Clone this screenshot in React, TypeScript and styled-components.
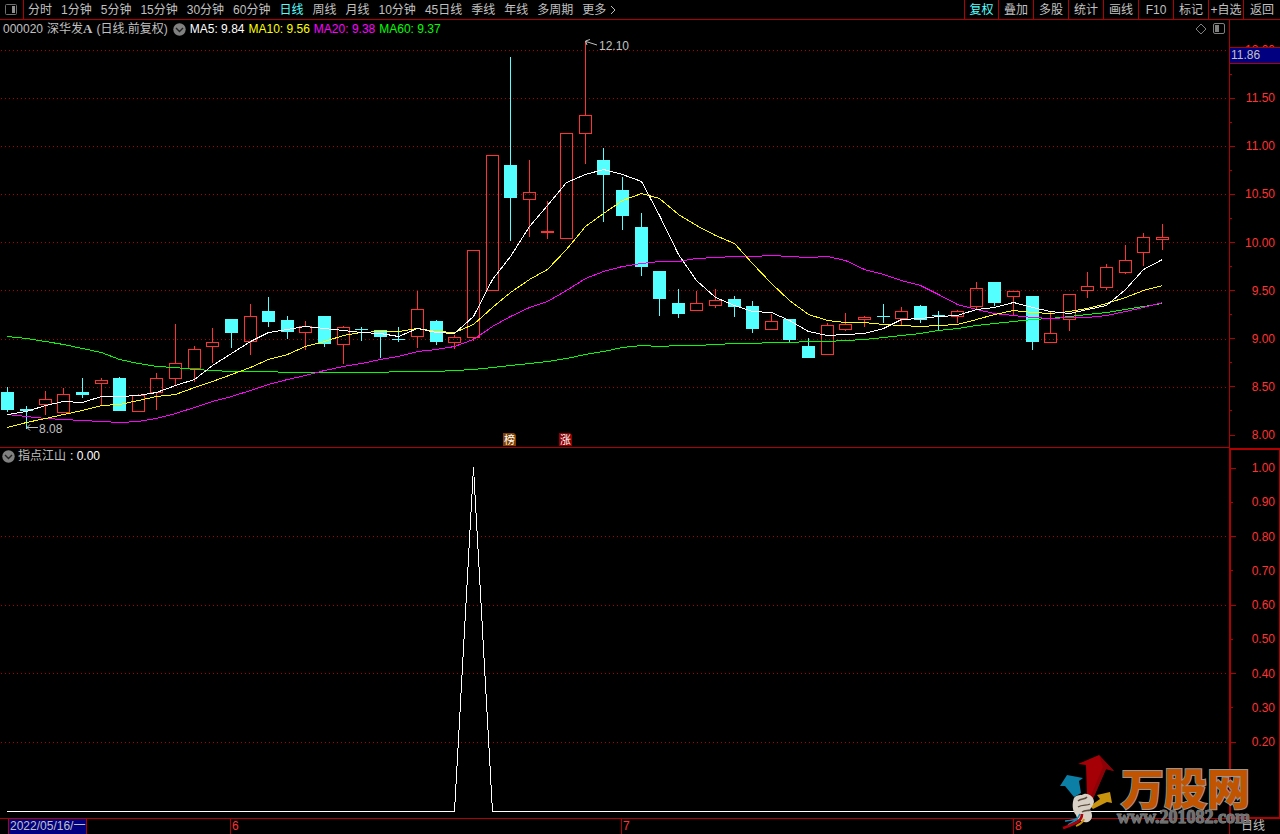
import React from "react";
import styled, { createGlobalStyle, css } from "styled-components";

const RED = "#b00000";
const BRIGHT = "#ff3232";
const CYAN = "#54ffff";
const SILVER = "#c0c0c0";
const NAVY = "#000080";

const GlobalStyle = createGlobalStyle`
  * { box-sizing: border-box; }
  body {
    margin: 0;
    background: #000;
    color: ${SILVER};
    font: 12px/16px "Liberation Sans", "Noto Sans CJK SC", sans-serif;
  }
`;

/* ---------- data ---------- */

type Candle = [kind: "u" | "d", high: number, top: number, bottom: number, low: number];

const candles: Candle[] = [
  ["d", 387, 392, 410, 412], ["d", 406, 409, 411, 429], ["u", 391, 399, 405, 415],
  ["u", 388, 394, 413, 413], ["d", 378, 392, 395, 398], ["u", 378, 380, 384, 406],
  ["d", 377, 378, 411, 411], ["u", 394, 395, 412, 412], ["u", 373, 378, 393, 410],
  ["u", 324, 363, 379, 385], ["u", 346, 349, 369, 382], ["u", 328, 342, 347, 363],
  ["d", 319, 319, 333, 348], ["u", 304, 316, 342, 355], ["d", 297, 311, 322, 327],
  ["d", 316, 320, 332, 339], ["u", 321, 326, 333, 350], ["d", 316, 316, 344, 347],
  ["u", 326, 327, 345, 364], ["d", 327, 329, 330, 341], ["d", 330, 330, 337, 358],
  ["d", 327, 339, 340, 342], ["u", 291, 309, 337, 348], ["d", 320, 321, 342, 345],
  ["u", 335, 337, 343, 349], ["u", 250, 250, 338, 341], ["u", 155, 155, 291, 291],
  ["d", 57, 165, 198, 241], ["u", 160, 192, 200, 237], ["u", 201, 231, 233, 239],
  ["u", 133, 133, 239, 239], ["u", 41, 115, 134, 164], ["d", 148, 160, 175, 222],
  ["d", 177, 190, 216, 230], ["d", 213, 227, 267, 276], ["d", 271, 271, 299, 316],
  ["d", 289, 303, 314, 318], ["u", 291, 303, 311, 311], ["u", 289, 300, 306, 308],
  ["d", 296, 299, 307, 317], ["d", 301, 306, 329, 333], ["u", 314, 321, 330, 330],
  ["d", 319, 319, 340, 342], ["d", 338, 346, 358, 358], ["u", 323, 325, 355, 355],
  ["u", 313, 324, 330, 331], ["u", 316, 317, 320, 327], ["d", 304, 316, 317, 323],
  ["u", 307, 311, 319, 325], ["d", 305, 306, 320, 323], ["d", 311, 315, 316, 330],
  ["u", 310, 311, 317, 323], ["u", 282, 288, 307, 309], ["d", 282, 282, 303, 306],
  ["u", 291, 291, 297, 316], ["d", 296, 296, 342, 350], ["u", 312, 333, 343, 343],
  ["u", 294, 294, 320, 331], ["u", 272, 286, 291, 298], ["u", 264, 267, 288, 290],
  ["u", 245, 260, 273, 274], ["u", 233, 237, 253, 266], ["u", 224, 237, 240, 250],
];

const averages = [
  {
    name: "MA60", value: "9.37", color: "#00ff00",
    ys: [336, 338, 341, 344, 348, 352, 359, 363, 366, 367, 369, 370, 371, 371, 371, 372, 372, 372, 372, 372, 372, 371, 371, 371, 370, 369, 367, 365, 363, 361, 358, 354, 351, 347, 345, 346, 345, 345, 344, 343, 343, 342, 342, 341, 341, 340, 339, 337, 335, 333, 330, 328, 325, 323, 321, 319, 318, 316, 314, 312, 309, 306, 303],
  },
  {
    name: "MA20", value: "9.38", color: "#ff00ff",
    ys: [414, 416, 418, 419, 420, 421, 422, 421, 418, 413, 407, 401, 396, 390, 384, 379, 375, 370, 366, 363, 359, 356, 351, 349, 346, 339, 326, 316, 307, 301, 290, 278, 271, 266, 263, 261, 261, 258, 257, 256, 256, 255, 256, 257, 256, 260, 269, 274, 280, 285, 294, 304, 309, 313, 315, 317, 318, 317, 317, 315, 311, 307, 302],
  },
  {
    name: "MA10", value: "9.56", color: "#ffff00",
    ys: [427, 422, 418, 414, 410, 405, 404, 400, 396, 394, 387, 381, 374, 367, 359, 354, 346, 341, 335, 332, 331, 331, 328, 331, 332, 324, 307, 292, 279, 269, 249, 226, 213, 200, 193, 198, 214, 225, 235, 243, 263, 283, 300, 314, 320, 322, 322, 324, 325, 326, 325, 324, 319, 314, 310, 312, 313, 311, 308, 303, 297, 290, 285],
  },
  {
    name: "MA5", value: "9.84", color: "#ffffff",
    ys: [414, 411, 405, 401, 402, 396, 396, 395, 392, 385, 379, 365, 353, 341, 332, 329, 326, 328, 330, 332, 333, 336, 328, 332, 333, 316, 279, 256, 226, 205, 182, 174, 169, 174, 181, 215, 254, 280, 297, 305, 311, 312, 320, 331, 335, 334, 333, 328, 319, 318, 316, 315, 309, 307, 302, 307, 311, 313, 309, 305, 289, 269, 259],
  },
];

const periods = ["分时", "1分钟", "5分钟", "15分钟", "30分钟", "60分钟", "日线", "周线", "月线", "10分钟", "45日线", "季线", "年线", "多周期"];
const tools = ["复权", "叠加", "多股", "统计", "画线", "F10", "标记", "+自选", "返回"];
const prices = ["12.00", "11.50", "11.00", "10.50", "10.00", "9.50", "9.00", "8.50", "8.00"];
const levels = ["1.00", "0.90", "0.80", "0.70", "0.60", "0.50", "0.40", "0.30", "0.20"];

const candleX = (i: number) => Math.floor(7.95 + i * 18.62);

/* ---------- parts ---------- */

const Page = styled.main`
  position: relative;
  display: flex;
  flex-direction: column;
  overflow: hidden;
`;

const Toolbar = styled.nav`
  display: flex;
  justify-content: space-between;
  height: 20px;
  border-bottom: 1px solid ${RED};
`;

const Periods = styled.div`
  display: flex;
  gap: 9px;
`;

const barButton = css`
  padding: 0;
  border: 0;
  background: none;
  color: ${SILVER};
  font: inherit;
  line-height: 18px;
  white-space: nowrap;
  cursor: pointer;
`;

const PeriodButton = styled.button<{ $active?: boolean }>`
  ${barButton}
  display: flex;
  align-items: center;
  color: ${(p) => (p.$active ? CYAN : SILVER)};
`;

const PanelButton = styled.button`
  ${barButton}
  display: grid;
  place-items: center;
  width: 24px;
  margin-right: -5px;
  border-right: 1px solid ${RED};
`;

const Tools = styled.div`
  display: flex;
`;

const ToolButton = styled.button<{ $active?: boolean }>`
  ${barButton}
  width: 35px;
  border-left: 1px solid ${RED};
  color: ${(p) => (p.$active ? CYAN : SILVER)};
  &:first-child { width: 34px; }
  &:last-child { width: 37px; }
`;

const Panel = styled.section`
  display: flex;
  align-items: stretch;
`;

const PlotArea = styled.div`
  flex: 1;
  min-width: 0;
  display: flex;
  flex-direction: column;
  border-bottom: 1px solid ${RED};
`;

const Legend = styled.header<{ $height: number }>`
  display: flex;
  align-items: center;
  height: ${(p) => p.$height}px;
  padding: 0 3px;
  gap: 4px;
  white-space: nowrap;
`;

const LegendText = styled.span<{ $color?: string }>`
  color: ${(p) => p.$color ?? SILVER};
`;

const SerifMark = styled.b`
  font-family: "Liberation Serif", serif;
  font-size: 13px;
`;

const Collapse = styled.button`
  display: grid;
  place-items: center;
  width: 14px;
  height: 14px;
  margin: 0 -1px 0 1px;
  padding: 0;
  border: 0;
  background: none;
`;

const LowerCollapse = styled(Collapse)`
  margin: 0 -1px 0 -2px;
`;

const LegendIcons = styled.span`
  display: flex;
  gap: 6px;
  margin-left: auto;
`;

const Plot = styled.svg`
  display: block;
  width: 100%;
  height: auto;
`;

const Axis = styled.ol<{ $framed?: boolean }>`
  position: relative;
  flex: none;
  display: flex;
  flex-direction: column;
  justify-content: space-between;
  width: 51px;
  margin: 0;
  padding: 22px 5px 5px 0;
  list-style: none;
  color: ${BRIGHT};
  border-left: 1px solid ${RED};
  ${(p) =>
    p.$framed &&
    css`
      padding: 10px 4px 67px 0;
      border: 2px solid ${RED};
      border-right-width: 1px;
    `}
`;

const Tick = styled.li<{ $minor?: boolean }>`
  display: flex;
  align-items: center;
  justify-content: space-between;
  height: 16px;
  &::before {
    content: "";
    width: ${(p) => (p.$minor ? 2 : 5)}px;
    height: 1px;
    background: ${RED};
  }
`;

const CursorPrice = styled.output`
  position: absolute;
  top: 27px;
  left: 0;
  right: 0;
  height: 17px;
  padding-left: 1px;
  border: solid ${RED};
  border-width: 1px 0;
  background: ${NAVY};
  color: ${SILVER};
  line-height: 14px;
`;

const Timeline = styled.footer`
  display: grid;
  grid-template-columns: 230fr 391fr 392fr 216fr 51px;
  height: 15px;
  line-height: 15px;
`;

const Month = styled.div`
  border-left: 1px solid ${RED};
  padding-left: 1px;
  color: ${BRIGHT};
`;

const FirstSpan = styled.div`
  padding-left: 8px;
`;

const DateCell = styled.time`
  display: block;
  width: 79px;
  padding-left: 1px;
  border: solid ${RED};
  border-width: 0 1px;
  background: ${NAVY};
  overflow: hidden;
  white-space: nowrap;
`;

const PeriodCell = styled.div`
  padding-left: 11px;
  border-left: 1px solid ${RED};
`;

const Watermark = styled.svg`
  position: absolute;
  right: 0;
  bottom: 0;
  width: 250px;
  height: 94px;
  pointer-events: none;
`;

/* ---------- drawings ---------- */

const ChevronDot = () => (
  <svg width="13" height="13" viewBox="0 0 13 13" aria-hidden="true">
    <circle cx="6.5" cy="6.5" r="6.2" fill="#808080" />
    <path d="M3 5 L6.5 8.5 L10 5" fill="none" stroke="#202020" strokeWidth="1.4" />
  </svg>
);

const Badge = ({ x, fill, children }: { x: number; fill: string; children: string }) => (
  <g>
    <path d={`M${x} 433 h11 l2 2 v11 h-13 Z`} fill={fill} />
    <text x={x + 6.5} y="443.5" fontSize="11" textAnchor="middle" fill="#fff">{children}</text>
  </g>
);

const Grid = ({ rows }: { rows: number[] }) => (
  <>
    {rows.map((y) => (
      <line key={y} x1="1" x2="1229" y1={y + 0.5} y2={y + 0.5} stroke={RED} strokeDasharray="1 3" />
    ))}
  </>
);

const PriceChart = () => (
  <Plot viewBox="0 38 1229 409" role="img" aria-label="日线">
    <g shapeRendering="crispEdges">
      <Grid rows={[50, 98, 146, 194, 242, 290, 339, 387]} />
      {candles.map(([kind, high, top, bottom, low], i) => {
        const x = candleX(i);
        const color = kind === "u" ? BRIGHT : CYAN;
        return (
          <g key={i} fill={color}>
            {top > high && <rect x={x} y={high} width="1" height={top - high} />}
            {low > bottom && <rect x={x} y={bottom} width="1" height={low - bottom} />}
            {kind === "u" && bottom - top > 2 ? (
              <rect x={x - 5.5} y={top + 0.5} width="12" height={bottom - top - 1} fill="none" stroke={color} />
            ) : (
              <rect x={x - 6} y={top} width="13" height={bottom - top} />
            )}
          </g>
        );
      })}
      {averages.map(({ name, color, ys }) => (
        <polyline
          key={name}
          fill="none"
          stroke={color}
          points={ys.map((y, i) => `${candleX(i) + 0.5},${y + 0.5}`).join(" ")}
        />
      ))}
    </g>
    <g fill="none" stroke={SILVER}>
      <path d="M597 45 L586 41.5 M590 39.5 L585.5 41 L587 45" />
      <path d="M38 427.5 H27 M30 424.5 L27 427.5 L30 430.5" />
    </g>
    <g fill={SILVER} fontSize="12">
      <text x="599" y="50">12.10</text>
      <text x="39" y="433">8.08</text>
    </g>
    <Badge x={503} fill="#804000">榜</Badge>
    <Badge x={559} fill="#900000">涨</Badge>
  </Plot>
);

const SignalChart = () => (
  <Plot viewBox="0 464 1229 354" role="img" aria-label="指点江山">
    <g shapeRendering="crispEdges">
      <Grid rows={[536, 605, 673, 742]} />
      <polyline fill="none" stroke="#fff" points="7,811.5 454.5,811.5 473.5,467 492.5,811.5 1162,811.5" />
    </g>
  </Plot>
);

const SiteMark = () => (
  <Watermark viewBox="0 0 250 94" aria-label="万股网">
    <polygon points="69,15 48,24 56,25 57,56 62,61 76,29 84,31" fill="#a40006" />
    <polygon points="69,15 84,31 76,29 62,61 60,58 73,27" fill="#8c0206" />
    <polygon points="37,35 30,46 35,46 44,57 51,53 49,41 53,38" fill="#0c7fa6" />
    <polygon points="80,52 82,63 77,62 63,69 60,66 70,59 67,55" fill="#c8940e" />
    <path d="M44 58 C47 54 51 56 54 54 C59 53 64 57 64 62 C63 66 61 67 60 70 C63 74 63 80 58 82 C52 83 47 80 46 75 C42 71 42 63 44 58 Z" fill="#d8d0c4" />
    <path d="M48 61 C51 58 55 60 57 57 M48 67 C52 64 57 66 60 64 M52 72 C55 70 58 71 60 70" fill="none" stroke="#5a4a3c" strokeWidth="1.4" />
    <path d="M50 74 C48 80 43 80 35 81 M48 79 L38 85" fill="none" stroke="#1489b2" strokeWidth="1.6" />
    <path d="M52 74 C52 82 44 84 33 88" fill="none" stroke="#b00008" strokeWidth="2.6" />
    <path d="M54 79 C53 83 50 84 46 86" fill="none" stroke="#c8940e" strokeWidth="2" />
    <text
      x="91" y="65" fontSize="43" fontWeight="900" fontFamily='"Noto Sans CJK SC", sans-serif'
      fill="#c05400" stroke="#969696" strokeWidth="2" strokeLinejoin="miter" paintOrder="stroke"
    >
      万股网
    </text>
    <text
      x="87" y="83" fontSize="18" fontWeight="700" fontFamily='"Liberation Serif", serif'
      fill="#707070" stroke="#8c8c8c" strokeWidth="1" paintOrder="stroke"
    >
      www.201082.com
    </text>
  </Watermark>
);

/* ---------- page ---------- */

export default function App() {
  return (
    <Page>
      <GlobalStyle />
      <Toolbar>
        <Periods>
          <PanelButton aria-label="面板">
            <svg width="13" height="11" viewBox="0 0 13 11">
              <rect x="0.5" y="0.5" width="11" height="10" rx="1" fill="none" stroke="#707070" />
              <rect x="7" y="2" width="3" height="7" fill="#909090" />
            </svg>
          </PanelButton>
          {periods.map((p) => (
            <PeriodButton key={p} $active={p === "日线"}>{p}</PeriodButton>
          ))}
          <PeriodButton>
            更多
            <svg width="12" height="10" viewBox="0 0 12 10" aria-hidden="true">
              <path d="M5 1 L9 5 L5 9" fill="none" stroke={SILVER} />
            </svg>
          </PeriodButton>
        </Periods>
        <Tools>
          {tools.map((t) => (
            <ToolButton key={t} $active={t === "复权"}>{t}</ToolButton>
          ))}
        </Tools>
      </Toolbar>

      <Panel>
        <PlotArea>
          <Legend $height={18}>
            <LegendText>000020</LegendText>
            <LegendText>深华发<SerifMark>A</SerifMark></LegendText>
            <LegendText>(日线.前复权)</LegendText>
            <Collapse aria-label="展开"><ChevronDot /></Collapse>
            {[...averages].reverse().map(({ name, value, color }) => (
              <LegendText key={name} $color={color}>{`${name}: ${value}`}</LegendText>
            ))}
            <LegendIcons>
              <svg width="12" height="12" viewBox="0 0 12 12" aria-hidden="true">
                <path d="M6 1 L11 6 L6 11 L1 6 Z" fill="none" stroke="#808080" />
              </svg>
              <svg width="13" height="12" viewBox="0 0 13 12" aria-hidden="true">
                <rect x="0.5" y="0.5" width="11" height="10" rx="1.5" fill="none" stroke="#808080" />
                <rect x="2" y="2" width="4" height="7" fill="#808080" />
              </svg>
            </LegendIcons>
          </Legend>
          <PriceChart />
        </PlotArea>
        <Axis>
          {prices.map((p, i) => (
            <React.Fragment key={p}>
              {i > 0 && <Tick $minor />}
              <Tick>{p}</Tick>
            </React.Fragment>
          ))}
          <CursorPrice>11.86</CursorPrice>
        </Axis>
      </Panel>

      <Panel>
        <PlotArea>
          <Legend $height={16}>
            <LowerCollapse aria-label="展开"><ChevronDot /></LowerCollapse>
            <LegendText>指点江山</LegendText>
            <LegendText $color="#fff">: 0.00</LegendText>
          </Legend>
          <SignalChart />
        </PlotArea>
        <Axis $framed>
          {levels.map((l, i) => (
            <Tick key={l} $minor={i % 2 === 1}>{l}</Tick>
          ))}
        </Axis>
      </Panel>

      <Timeline>
        <FirstSpan><DateCell dateTime="2022-05-16">2022/05/16/一</DateCell></FirstSpan>
        <Month>6</Month>
        <Month>7</Month>
        <Month>8</Month>
        <PeriodCell>日线</PeriodCell>
      </Timeline>
      <SiteMark />
    </Page>
  );
}
